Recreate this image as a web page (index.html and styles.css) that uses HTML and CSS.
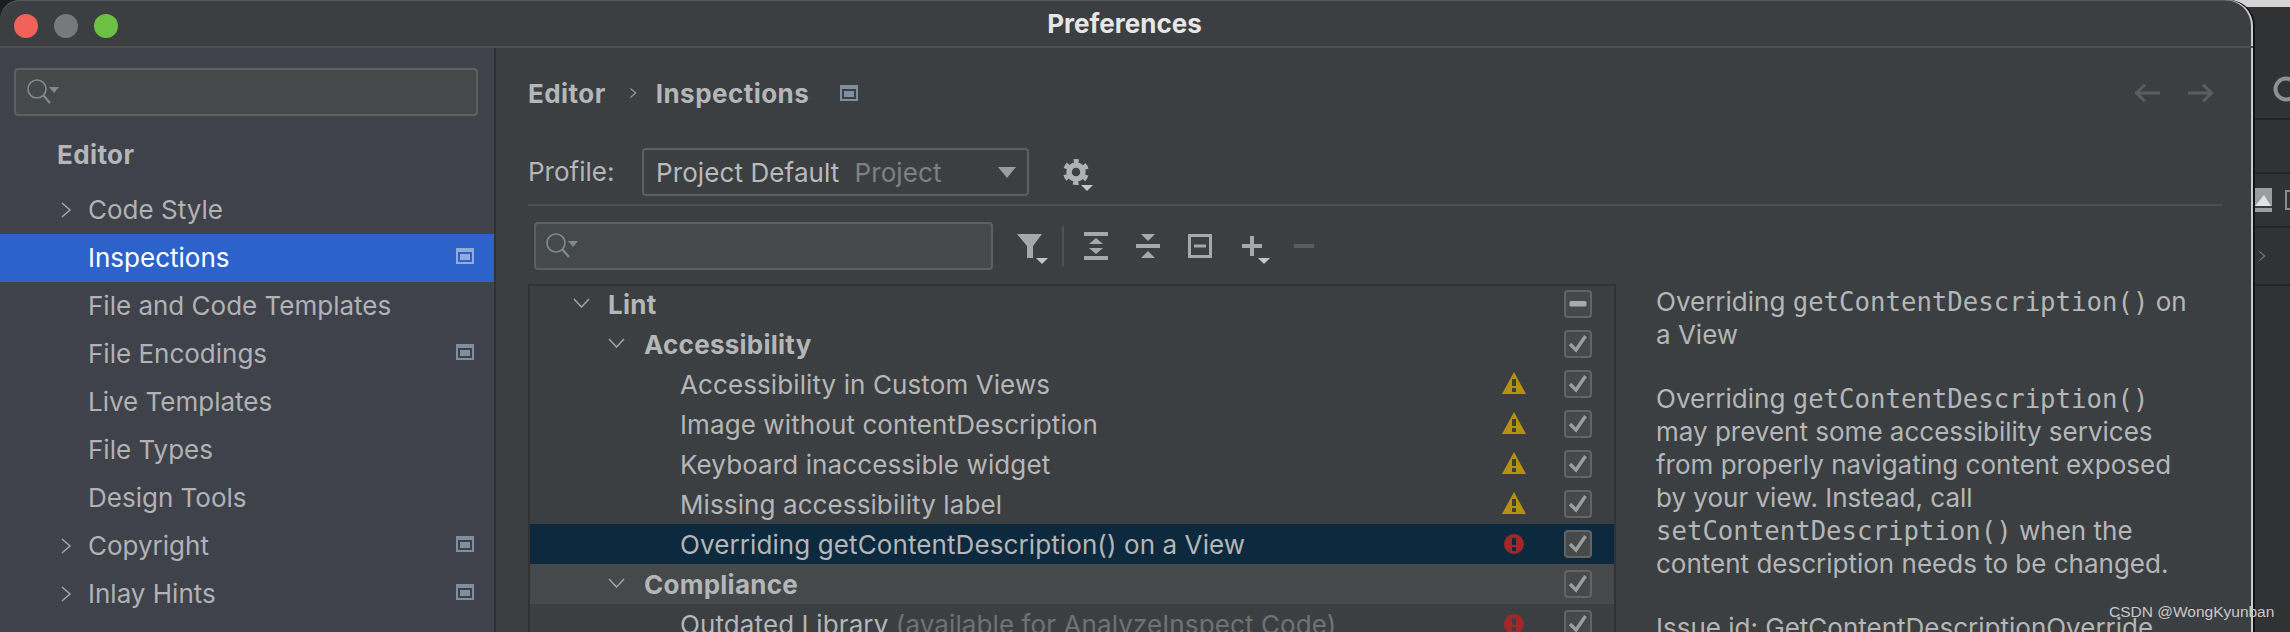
FILE: index.html
```html
<!DOCTYPE html>
<html lang="en">
<head>
<meta charset="utf-8">
<title>Preferences</title>
<link rel="stylesheet" href="styles.css">
</head>
<body>
<svg class="defs" width="0" height="0" aria-hidden="true">
  <defs>
    <symbol id="chev-r" viewBox="0 0 12 16"><path d="M2 1 L10 8 L2 15" fill="none" stroke="currentColor" stroke-width="1.6"/></symbol>
    <symbol id="chev-d" viewBox="0 0 17 10"><path d="M1 1 L8.5 9 L16 1" fill="none" stroke="currentColor" stroke-width="1.6"/></symbol>
    <symbol id="proj" viewBox="0 0 18 16"><path fill-rule="evenodd" d="M0 0H18V16H0Z M2 4V14H16V4Z" fill="currentColor"/><rect x="4" y="6" width="10" height="6" fill="currentColor"/></symbol>
    <symbol id="warn" viewBox="0 0 24 22"><path fill-rule="evenodd" d="M12 0 L24 22 H0 Z M10 7V14H14V7Z M10 16V20H14V16Z" fill="#b8900f"/></symbol>
    <symbol id="err" viewBox="0 0 20 20"><path fill-rule="evenodd" d="M10 0A10 10 0 1 0 10 20A10 10 0 1 0 10 0Z M8 4V11H12V4Z M8 13V17H12V13Z" fill="#a32628"/></symbol>
    <symbol id="check" viewBox="0 0 28 28"><rect x="1" y="1" width="26" height="26" rx="3" fill="#45494a" stroke="#646464" stroke-width="2"/><path d="M6 14 L12 20 L21.500 6" fill="none" stroke="#9a9c9e" stroke-width="3.400"/></symbol>
    <symbol id="dash" viewBox="0 0 28 28"><rect x="1" y="1" width="26" height="26" rx="3" fill="#45494a" stroke="#646464" stroke-width="2"/><rect x="5.500" y="11" width="17" height="5.500" rx="1.500" fill="#a8aaac"/></symbol>
    <symbol id="search" viewBox="0 0 34 28"><circle cx="11" cy="11" r="9" fill="none" stroke="#7f8b91" stroke-width="1.600"/><path d="M17.500 17.500 L24 25" stroke="#7f8b91" stroke-width="2.200"/><path d="M23 9 H33 L28 15Z" fill="#7f8b91"/></symbol>
  </defs>
</svg>

<div class="backdrop">
  <div class="back-row back-top"><svg class="back-lens" viewBox="0 0 28 28"><circle cx="14" cy="14" r="10.500" fill="none" stroke="#8e9092" stroke-width="4"/></svg></div>
  <div class="back-row back-plain"></div>
  <div class="back-row back-icons">
    <svg class="back-img" viewBox="0 0 18 24"><rect width="18" height="24" fill="#9a9c9e"/><path d="M1 18 L10 7 L17 18Z" fill="#e2e2e2"/><rect x="0" y="18" width="18" height="2" fill="#3a3c3d"/></svg>
    <span class="back-box"></span>
  </div>
  <div class="back-row back-chev"><svg class="chev-small"><use href="#chev-r"/></svg></div>
</div>

<main class="window">
  <header class="titlebar">
    <div class="lights"><span class="light red"></span><span class="light grey"></span><span class="light green"></span></div>
    <h1 class="title">Preferences</h1>
  </header>
  <div class="body">
    <nav class="sidebar">
      <div class="search search-side"><svg class="search-icon"><use href="#search"/></svg></div>
      <div class="side-head">Editor</div>
      <ul class="side-list">
        <li class="side-item"><svg class="chev"><use href="#chev-r"/></svg><span>Code Style</span></li>
        <li class="side-item active"><span>Inspections</span><svg class="proj"><use href="#proj"/></svg></li>
        <li class="side-item"><span>File and Code Templates</span></li>
        <li class="side-item"><span>File Encodings</span><svg class="proj"><use href="#proj"/></svg></li>
        <li class="side-item"><span>Live Templates</span></li>
        <li class="side-item"><span>File Types</span></li>
        <li class="side-item"><span>Design Tools</span></li>
        <li class="side-item"><svg class="chev"><use href="#chev-r"/></svg><span>Copyright</span><svg class="proj"><use href="#proj"/></svg></li>
        <li class="side-item"><svg class="chev"><use href="#chev-r"/></svg><span>Inlay Hints</span><svg class="proj"><use href="#proj"/></svg></li>
        <li class="side-item"><span>TODO</span></li>
      </ul>
    </nav>
    <section class="content">
      <div class="crumbs">
        <span class="crumb">Editor</span>
        <svg class="crumb-chev"><use href="#chev-r"/></svg>
        <span class="crumb">Inspections</span>
        <svg class="proj crumb-proj"><use href="#proj"/></svg>
        <div class="arrows">
          <svg class="arrow" viewBox="0 0 26 20"><path d="M1 10H26 M11 1.500 L2.500 10 L11 18.500" fill="none" stroke="#5b5d5f" stroke-width="3"/></svg>
          <svg class="arrow" viewBox="0 0 26 20"><path d="M0 10H25 M15 1.500 L23.500 10 L15 18.500" fill="none" stroke="#5b5d5f" stroke-width="3"/></svg>
        </div>
      </div>
      <div class="profile">
        <span class="profile-label">Profile:</span>
        <div class="select"><span>Project Default</span><span class="muted">Project</span><span class="caret"></span></div>
        <svg class="gear" viewBox="0 0 30 32">
          <circle cx="13" cy="13" r="7" fill="none" stroke="#afb1b3" stroke-width="5.500"/>
          <circle cx="13" cy="13" r="11" fill="none" stroke="#afb1b3" stroke-width="4" stroke-dasharray="5.500 6.020" stroke-dashoffset="2.750" transform="rotate(-90 13 13)"/>
          <path d="M18 26H30L24 32Z" fill="#c4c6c8"/>
        </svg>
      </div>
      <div class="toolbar">
        <div class="search search-tool"><svg class="search-icon"><use href="#search"/></svg></div>
        <svg class="tool tool-filter" viewBox="0 0 31 30"><path d="M0 0H25L16 12V24H10V12Z" fill="#a6a8aa"/><path d="M19 24H31L25 30Z" fill="#c4c6c8"/></svg>
        <span class="tool-sep"></span>
        <svg class="tool tool-expand" viewBox="0 0 24 28"><path d="M0 0H24V4H0Z M0 24H24V28H0Z M12 6 L19 12H5Z M12 22 L19 16H5Z" fill="#a6a8aa"/></svg>
        <svg class="tool tool-collapse" viewBox="0 0 24 24"><path d="M0 10H24V14H0Z M5 0H19L12 7Z M12 17 L19 24H5Z" fill="#a6a8aa"/></svg>
        <svg class="tool tool-box" viewBox="0 0 24 24"><path fill-rule="evenodd" d="M0 0H24V24H0Z M3 3V21H21V3Z M6 10.500H18V13.500H6Z" fill="#a6a8aa"/></svg>
        <svg class="tool tool-plus" viewBox="0 0 28 28"><path d="M8 0H12V8H20V12H12V20H8V12H0V8H8Z" fill="#a6a8aa"/><path d="M16 22H28L22 28Z" fill="#c4c6c8"/></svg>
        <svg class="tool tool-minus" viewBox="0 0 20 4"><rect width="20" height="4" fill="#5b5d5f"/></svg>
      </div>
      <div class="split">
        <div class="tree">
          <div class="row lvl0 group"><svg class="tchev"><use href="#chev-d"/></svg><span class="name">Lint</span><svg class="cb"><use href="#dash"/></svg></div>
          <div class="row lvl1 group"><svg class="tchev"><use href="#chev-d"/></svg><span class="name">Accessibility</span><svg class="cb"><use href="#check"/></svg></div>
          <div class="row lvl2"><span class="name">Accessibility in Custom Views</span><svg class="sev"><use href="#warn"/></svg><svg class="cb"><use href="#check"/></svg></div>
          <div class="row lvl2"><span class="name">Image without contentDescription</span><svg class="sev"><use href="#warn"/></svg><svg class="cb"><use href="#check"/></svg></div>
          <div class="row lvl2"><span class="name">Keyboard inaccessible widget</span><svg class="sev"><use href="#warn"/></svg><svg class="cb"><use href="#check"/></svg></div>
          <div class="row lvl2"><span class="name">Missing accessibility label</span><svg class="sev"><use href="#warn"/></svg><svg class="cb"><use href="#check"/></svg></div>
          <div class="row lvl2 selected"><span class="name">Overriding getContentDescription() on a View</span><svg class="sev sev-err"><use href="#err"/></svg><svg class="cb"><use href="#check"/></svg></div>
          <div class="row lvl1 group hover"><svg class="tchev"><use href="#chev-d"/></svg><span class="name">Compliance</span><svg class="cb"><use href="#check"/></svg></div>
          <div class="row lvl2"><span class="name">Outdated Library <span class="muted-2">(available for AnalyzeInspect Code)</span></span><svg class="sev sev-err"><use href="#err"/></svg><svg class="cb"><use href="#check"/></svg></div>
        </div>
        <article class="desc">
          <p>Overriding <code>getContentDescription()</code> on<br>a View</p>
          <p>Overriding <code>getContentDescription()</code><br>may prevent some accessibility services<br>from properly navigating content exposed<br>by your view. Instead, call<br><code>setContentDescription()</code> when the<br>content description needs to be changed.</p>
          <p>Issue id: GetContentDescriptionOverride</p>
        </article>
      </div>
    </section>
  </div>
</main>
<div class="watermark">CSDN @WongKyunban</div>
</body>
</html>
```
FILE: styles.css
```css
* { box-sizing: border-box; }
html, body { margin: 0; height: 632px; overflow: hidden; }
body {
  background: #1c1d1e;
  position: relative;
  font-family: "Inter", "Liberation Sans", sans-serif;
  color: #b4b6b8;
  display: flex;
}
.defs { position: absolute; }

.window {
  position: relative;
  z-index: 1;
  width: 2253px;
  height: 632px;
  background: #3c3f41;
  border-radius: 20px 26px 0 0;
  box-shadow: inset -2px 0 0 #c8cacc, inset 0 1px 0 #55585a, 2px 0 0 #111;
  display: flex;
  flex-direction: column;
  overflow: hidden;
  flex: none;
}

/* the other window, behind this one */
.backdrop {
  position: absolute;
  left: 2225px;
  top: 0;
  width: 65px;
  height: 632px;
  background: #303233;
  border-top: 7px solid #d4d4d4;
  padding-left: 29px;
}
.back-row { display: flex; align-items: center; overflow: hidden; border-bottom: 2px solid #232425; }
.back-top { height: 113px; align-items: flex-start; padding: 68px 0 0 18px; }
.back-plain { height: 54px; }
.back-icons { height: 54px; gap: 13px; }
.back-chev { height: 58px; }
.back-lens { width: 28px; height: 28px; flex: none; }
.back-img { width: 18px; height: 24px; flex: none; }
.back-box { width: 14px; height: 20px; border: 2px solid #8a8c8e; flex: none; }
.chev-small { width: 8px; height: 14px; margin-left: 4px; color: #7a7c7e; }

.titlebar {
  height: 48px;
  flex: none;
  display: flex;
  align-items: center;
  justify-content: center;
  position: relative;
  border-bottom: 2px solid #4c4d4e;
}
.lights { position: absolute; left: 14px; top: 14px; display: flex; gap: 16px; }
.light { width: 24px; height: 24px; border-radius: 50%; }
.red { background: #f0625a; }
.grey { background: #77797c; }
.green { background: #6cc144; }
.title { margin: 0 4px 0 0; font-size: 26px; font-weight: 700; color: #e6e6e6; }

.body { flex: 1; display: flex; min-height: 0; }
.sidebar {
  width: 496px;
  flex: none;
  background: #3f424b;
  border-right: 2px solid #303132;
  padding-top: 20px;
}
.search {
  display: flex;
  align-items: center;
  background: #45494a;
  border: 2px solid #5e6060;
  border-radius: 4px;
  flex: none;
}
.search-side { width: 464px; height: 48px; margin-left: 14px; padding-left: 10px; }
.search-tool { width: 459px; height: 48px; padding-left: 9px; }
.search-icon { width: 34px; height: 28px; }
.side-head { height: 48px; margin-top: 15px; padding-left: 57px; font-size: 26px; font-weight: 700; line-height: 48px; color: #b4b6b8; letter-spacing: .4px; }
.side-list { list-style: none; margin: 7px 0 0; padding: 0; }
.side-item {
  height: 48px;
  display: flex;
  align-items: center;
  position: relative;
  padding: 0 20px 2px 88px;
  font-size: 26px;
  white-space: nowrap;
  color: #b0b2b4;
}
.side-item .proj { margin: 0 0 2px auto; }
.side-item.active { background: #2e62cb; color: #fff; }
.side-item.active .proj { color: #90abdc; }
.chev { position: absolute; left: 60px; top: 16px; width: 12px; height: 16px; color: #a0a2a4; }
.proj { width: 18px; height: 16px; color: #7f8f9e; flex: none; }

.content { flex: 1; min-width: 0; padding: 0 31px 0 32px; display: flex; flex-direction: column; }
.crumbs { height: 58px; margin-top: 16px; flex: none; display: flex; align-items: center; font-size: 26px; font-weight: 700; color: #b4b6b8; letter-spacing: .45px; }
.crumb-chev { width: 8px; height: 12px; margin: 0 19px 0 23px; color: #a0a2a4; }
.crumb-proj { margin-left: 31px; color: #7f8f9e; }
.arrows { margin-left: auto; display: flex; gap: 28px; padding-right: 8px; }
.arrow { width: 26px; height: 20px; }

.profile { height: 58px; margin-top: 26px; flex: none; display: flex; align-items: flex-start; border-bottom: 2px solid #4c4d4e; font-size: 26px; }
.profile-label { width: 114px; line-height: 48px; }
.select { width: 387px; height: 48px; border: 2px solid #5e6060; border-radius: 4px; display: flex; align-items: center; padding-left: 12px; gap: 15px; position: relative; color: #b8babc; letter-spacing: .1px; }
.muted { color: #7e8082; }
.caret { position: absolute; right: 11px; top: 17px; width: 0; height: 0; border-left: 9px solid transparent; border-right: 9px solid transparent; border-top: 11px solid #9a9c9e; }
.gear { width: 30px; height: 32px; margin: 11px 0 0 34px; }

.toolbar { height: 48px; margin-top: 16px; flex: none; display: flex; align-items: center; padding-left: 6px; }
.tool { flex: none; }
.tool-filter { width: 31px; height: 30px; margin: 6px 0 0 24px; }
.tool-sep { width: 2px; height: 40px; background: #505253; margin: 0 20px 0 14px; flex: none; }
.tool-expand { width: 24px; height: 28px; }
.tool-collapse { width: 24px; height: 24px; margin-left: 28px; }
.tool-box { width: 24px; height: 24px; margin-left: 28px; }
.tool-plus { width: 28px; height: 28px; margin: 8px 0 0 30px; }
.tool-minus { width: 20px; height: 4px; margin-left: 24px; }

.split { margin-top: 14px; flex: 1; display: flex; min-height: 0; }
.tree { width: 1088px; flex: none; border: 2px solid #323232; border-width: 0 2px; box-shadow: inset 0 2px 0 #323232; }
.row { height: 40px; display: flex; align-items: center; position: relative; font-size: 26px; white-space: nowrap; color: #b4b6b8; letter-spacing: .1px; }
.lvl0 { padding-left: 78px; }
.lvl1 { padding-left: 114px; }
.lvl2 { padding-left: 150px; }
.group { font-weight: 700; letter-spacing: .25px; }
.selected { background: #0d293e; }
.hover { background: #45494b; }
.muted-2 { color: #707274; }
.tchev { position: absolute; width: 17px; height: 10px; top: 14px; color: #a0a2a4; }
.lvl0 .tchev { left: 43px; }
.lvl1 .tchev { left: 78px; }
.sev { position: absolute; left: 972px; top: 8px; width: 24px; height: 22px; }
.sev-err { left: 974px; width: 20px; height: 20px; top: 10px; }
.cb { position: absolute; left: 1034px; top: 6px; width: 28px; height: 28px; }

.desc { padding: 1px 0 0 40px; font-size: 26px; line-height: 33px; color: #b4b6b8; flex: 1; }
.desc p { margin: 0 0 31px; white-space: nowrap; }
code { font-family: "DejaVu Sans Mono", "Liberation Mono", monospace; font-size: 25.700px; line-height: 0; }

.watermark { position: absolute; z-index: 2; left: 2109px; top: 603px; font-size: 15.500px; font-family: "Liberation Sans", sans-serif; color: #c8c8c8; }
```
